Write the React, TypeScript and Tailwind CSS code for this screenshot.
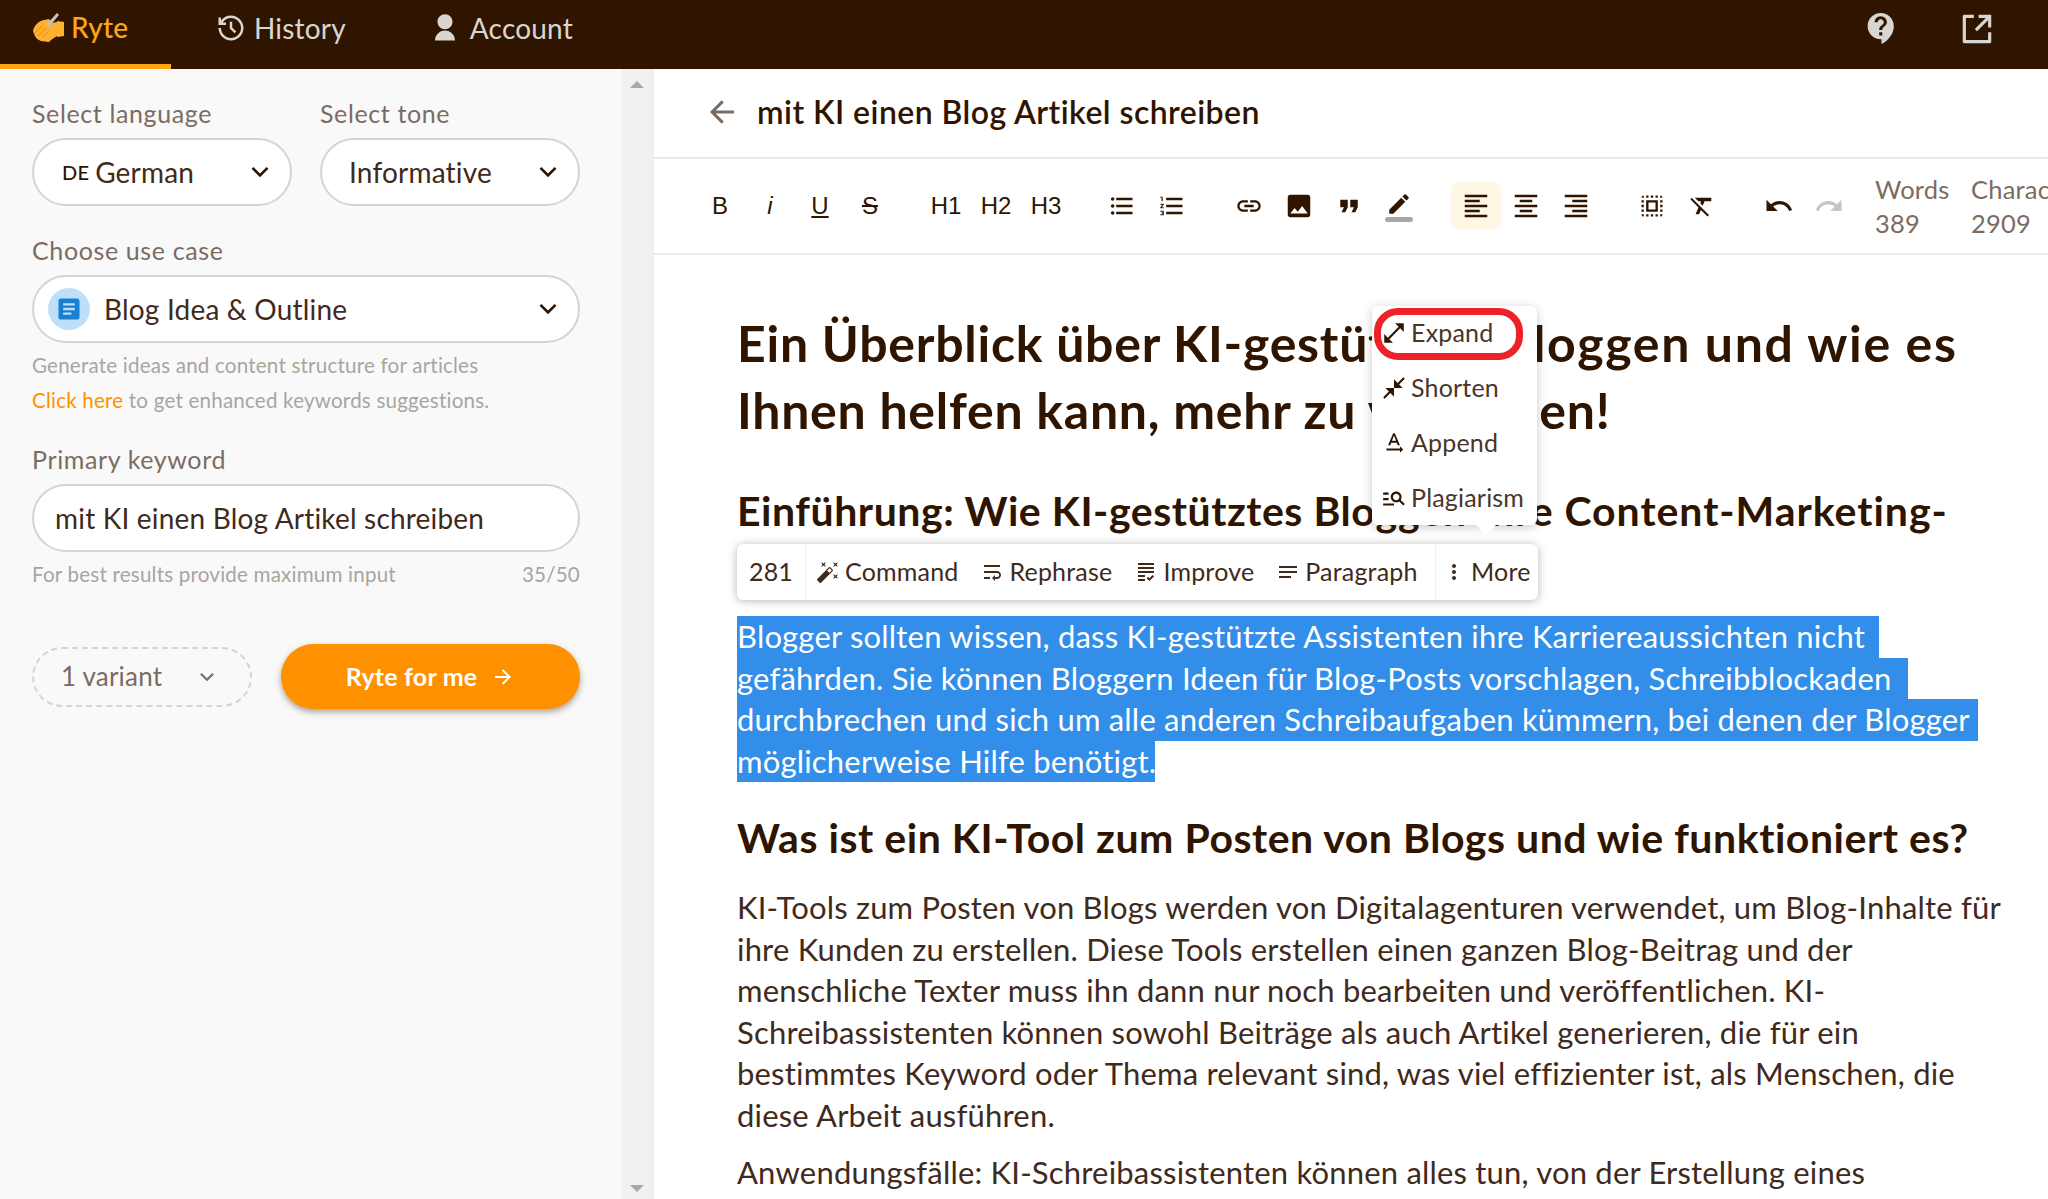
import type { ReactNode } from 'react';
import { RiArrowDownSLine, RiArrowLeftLine, RiArrowRightLine, RiHistoryLine, RiUserFill, RiShareBoxLine } from 'react-icons/ri';
import {
  MdArticle,
  MdAutoFixHigh,
  MdCloseFullscreen,
  MdContactSupport,
  MdEdit,
  MdFormatAlignCenter,
  MdFormatAlignLeft,
  MdFormatAlignRight,
  MdFormatClear,
  MdFormatListBulleted,
  MdFormatListNumbered,
  MdFormatQuote,
  MdImage,
  MdLink,
  MdMoreVert,
  MdNotes,
  MdOpenInFull,
  MdOutlineGrading,
  MdOutlineManageSearch,
  MdRedo,
  MdSelectAll,
  MdTextRotationNone,
  MdUndo,
  MdWrapText,
} from 'react-icons/md';

const selected = [
  { text: 'Blogger sollten wissen, dass KI-gestützte Assistenten ihre Karriereaussichten nicht', w: 'w-[1142px]' },
  { text: 'gefährden. Sie können Bloggern Ideen für Blog-Posts vorschlagen, Schreibblockaden', w: 'w-[1171px]' },
  { text: 'durchbrechen und sich um alle anderen Schreibaufgaben kümmern, bei denen der Blogger', w: 'w-[1241px]' },
  { text: 'möglicherweise Hilfe benötigt.', w: 'w-[418px]' },
];

const paragraph = [
  'KI-Tools zum Posten von Blogs werden von Digitalagenturen verwendet, um Blog-Inhalte für',
  'ihre Kunden zu erstellen. Diese Tools erstellen einen ganzen Blog-Beitrag und der',
  'menschliche Texter muss ihn dann nur noch bearbeiten und veröffentlichen. KI-',
  'Schreibassistenten können sowohl Beiträge als auch Artikel generieren, die für ein',
  'bestimmtes Keyword oder Thema relevant sind, was viel effizienter ist, als Menschen, die',
  'diese Arbeit ausführen.',
];

function Label({ children }: { children: ReactNode }) {
  return <div className="h-[34px] text-[25px] leading-[34px] tracking-[0.025em] text-[#7b6c62]">{children}</div>;
}

function Select({ children, className }: { children: ReactNode; className: string }) {
  return (
    <div className={`flex h-[68px] items-center justify-between rounded-full border-2 border-[#d8d3cf] bg-white pr-[14px] text-[28px] text-[#3f2a1c] ${className}`}>
      {children}
      <RiArrowDownSLine className="size-[32px] text-[#2f1500]" />
    </div>
  );
}

function Tool({ children, className = '' }: { children: ReactNode; className?: string }) {
  return (
    <div className={`flex h-[48px] w-[50px] shrink-0 items-center justify-center text-[#2f1500] ${className}`}>
      {children}
    </div>
  );
}

function TextTool({ children, className = '' }: { children: ReactNode; className?: string }) {
  return <Tool className={`[font-family:'Liberation_Sans',sans-serif] text-[24px] tracking-normal ${className}`}>{children}</Tool>;
}

function MenuItem({ icon, label }: { icon: ReactNode; label: string }) {
  return (
    <div className="flex h-[55px] items-center gap-[5px] pb-[2px] pl-[10px] text-[25px] text-[#4a3527]">
      <span className="flex w-[24px] justify-center text-[#2f1500]">{icon}</span>
      {label}
    </div>
  );
}

function BarItem({ icon, label }: { icon: ReactNode; label: string }) {
  return (
    <div className="flex items-center gap-[5px] text-[25px] text-[#3f2a1c]">
      {icon}
      {label}
    </div>
  );
}

export default function App() {
  return (
    <div className="flex h-[1199px] flex-col overflow-hidden bg-white [font-family:'Lato',sans-serif] tracking-[0.012em]">
      {/* Navigation */}
      <header className="flex h-[69px] shrink-0 items-stretch bg-[#2f1500]">
        <div className="flex w-[171px] items-center gap-[4px] border-b-[5px] border-[#ffa516] pb-[10px] pl-[31px] text-[28px] font-medium text-[#ffa516]">
          <svg viewBox="0 0 34 30" className="h-[30px] w-[36px]">
            <path d="M1 19c1-6 6-10 11-11l5-1 3 4 5-1v-1l7 1v14l-7 1v-1l-6 4-2 2-8-1-4-2-2-3z" fill="#ffb02e" />
            <path d="M3 21l8-8M6 24l8-8M10 26l7-7" stroke="#e0901a" strokeWidth="1" />
            <path d="M14 13 25 1l2 2-10 12z" fill="#c9c2b8" />
          </svg>
          Ryte
        </div>
        <div className="ml-[45px] flex items-center gap-[8px] pb-[14px] text-[28px] text-[#d9d5d1]">
          <RiHistoryLine className="size-[30px]" />
          History
        </div>
        <div className="ml-[84px] flex items-center gap-[10px] pb-[14px] text-[28px] text-[#d9d5d1]">
          <RiUserFill className="size-[30px]" />
          Account
        </div>
        <div className="ml-auto mr-[52px] flex items-center gap-[58px] pb-[12px] text-[#d9d5d1]">
          <MdContactSupport className="size-[37px]" />
          <RiShareBoxLine className="size-[38px]" />
        </div>
      </header>

      <div className="flex min-h-0 flex-1">
        {/* Form sidebar */}
        <aside className="flex w-[654px] shrink-0 border-r-2 border-[#eeeeee] bg-[#f9f9f9]">
          <div className="w-[622px] px-[32px] pt-[27px]">
            <div className="flex w-[548px] gap-[28px]">
              <div className="flex-1">
                <Label>Select language</Label>
                <Select className="mt-[8px] pl-[28px]">
                  <span className="flex items-center gap-[6px]">
                    <span className="text-[20px] font-medium text-[#2f1500]">DE</span>
                    German
                  </span>
                </Select>
              </div>
              <div className="flex-1">
                <Label>Select tone</Label>
                <Select className="mt-[8px] pl-[27px]">Informative</Select>
              </div>
            </div>
            <div className="mt-[27px] w-[548px]">
              <Label>Choose use case</Label>
              <Select className="mt-[8px] pl-[14px]">
                <span className="flex items-center gap-[14px]">
                  <span className="flex size-[42px] items-center justify-center rounded-full bg-[#bcdffb]">
                    <MdArticle className="size-[28px] text-[#1a7fce]" />
                  </span>
                  Blog Idea &amp; Outline
                </span>
              </Select>
            </div>
            <p className="mt-[5px] whitespace-nowrap text-[20.6px] leading-[35px] text-[#aaa49f]">
              Generate ideas and content structure for articles
              <br />
              <span className="text-[#ff9000]">Click here</span> to get enhanced keywords suggestions.
            </p>
            <div className="mt-[24px] w-[548px]">
              <Label>Primary keyword</Label>
              <div className="mt-[8px] flex h-[68px] items-center rounded-full border-2 border-[#d8d3cf] bg-white pl-[21px] text-[28px] text-[#3f2a1c]">
                mit KI einen Blog Artikel schreiben
              </div>
              <div className="mt-[8px] flex justify-between text-[20.6px] leading-[28px] text-[#aaa49f]">
                <span>For best results provide maximum input</span>
                <span>35/50</span>
              </div>
            </div>
            <div className="mt-[56px] flex w-[548px] items-center justify-between">
              <div className="flex h-[60px] w-[220px] items-center justify-between rounded-full border-2 border-dashed border-[#d8d3cf] pl-[27px] pr-[30px] text-[26px] text-[#7b6c62]">
                1 variant
                <RiArrowDownSLine className="size-[26px]" />
              </div>
              <div className="flex h-[65px] w-[299px] items-center justify-center gap-[14px] rounded-full bg-[#ff9000] text-[25px] font-bold text-white shadow-[0_3px_6px_rgba(80,50,20,0.45)]">
                Ryte for me
                <RiArrowRightLine className="size-[24px]" />
              </div>
            </div>
          </div>
          <div className="flex w-[30px] flex-col items-center justify-between bg-[#f1f1f1] pb-[7px] pt-[12px]">
            <div className="h-0 w-0 border-x-[7px] border-b-[7px] border-x-transparent border-b-[#a8a8a8]" />
            <div className="h-0 w-0 border-x-[7px] border-t-[7px] border-x-transparent border-t-[#a8a8a8]" />
          </div>
        </aside>

        {/* Editor */}
        <main className="relative min-w-0 flex-1 overflow-hidden">
          <div className="flex h-[90px] items-center gap-[17px] border-b-2 border-[#e8e8e8] pb-[2px] pl-[50px]">
            <RiArrowLeftLine className="size-[36px] text-[#7b6c62]" />
            <h2 className="text-[32px] font-semibold tracking-[0.014em] text-[#2f1500]">mit KI einen Blog Artikel schreiben</h2>
          </div>
          <div className="flex h-[96px] items-center border-b-2 border-[#eeebe8] pl-[41px]">
            <TextTool>B</TextTool>
            <TextTool className="italic">i</TextTool>
            <TextTool className="underline">U</TextTool>
            <TextTool className="line-through">S</TextTool>
            <div className="w-[26px] shrink-0" />
            <TextTool>H1</TextTool>
            <TextTool>H2</TextTool>
            <TextTool>H3</TextTool>
            <div className="w-[26px] shrink-0" />
            <Tool><MdFormatListBulleted className="size-[28px]" /></Tool>
            <Tool><MdFormatListNumbered className="size-[28px]" /></Tool>
            <div className="w-[27px] shrink-0" />
            <Tool><MdLink className="size-[28px]" /></Tool>
            <Tool><MdImage className="size-[30px]" /></Tool>
            <Tool><MdFormatQuote className="size-[30px]" /></Tool>
            <Tool className="flex-col">
              <MdEdit className="size-[26px]" />
              <span className="h-[5px] w-[28px] rounded-full bg-[#a9a5a1]" />
            </Tool>
            <div className="w-[27px] shrink-0" />
            <Tool className="rounded-[8px] bg-[#fef7e6]"><MdFormatAlignLeft className="size-[30px]" /></Tool>
            <Tool><MdFormatAlignCenter className="size-[30px]" /></Tool>
            <Tool><MdFormatAlignRight className="size-[30px]" /></Tool>
            <div className="w-[26px] shrink-0" />
            <Tool><MdSelectAll className="size-[28px]" /></Tool>
            <Tool><MdFormatClear className="size-[28px]" /></Tool>
            <div className="w-[27px] shrink-0" />
            <Tool><MdUndo className="size-[30px]" /></Tool>
            <Tool className="text-[#c9c4c0]"><MdRedo className="size-[30px]" /></Tool>
            <div className="ml-[21px] w-[96px] shrink-0 text-[25.5px] leading-[34px] text-[#7b6c62]">
              Words
              <br />
              389
            </div>
            <div className="shrink-0 text-[25.5px] leading-[34px] text-[#7b6c62]">
              Characters
              <br />
              2909
            </div>
          </div>

          <article className="w-[1394px] pl-[83px] pt-[55px] text-[#2f1500]">
            <h1 className="whitespace-nowrap text-[50px] font-bold leading-[67px] tracking-[0.015em]">
              Ein Überblick über KI-gestü<span className="tracking-[0.033em]">tztes Bloggen und wie es</span>
              <br />
              Ihnen helfen kann, mehr zu verdienen!
            </h1>
            <h2 className="mt-[40px] whitespace-nowrap text-[41px] font-bold leading-[54px] tracking-[0.013em]">
              Einführung: Wie KI-gestütztes Blo<span className="tracking-[0.0235em]">ggen Ihre Content-Marketing-</span>
            </h2>
            <div className="mt-[78px] text-[31px] leading-[41.5px]">
              {selected.map((line) => (
                <div key={line.text} className={`${line.w} whitespace-nowrap bg-[#338eea] text-white`}>
                  {line.text}
                </div>
              ))}
            </div>
            <h2 className="mt-[29px] whitespace-nowrap text-[41px] font-bold leading-[54px] tracking-[0.013em]">
              Was ist ein KI-Tool zum Posten von Blogs und wie funktioniert es?
            </h2>
            <div className="mt-[22px] text-[31px] leading-[41.5px] text-[#3f2a1c]">
              {paragraph.map((line) => (
                <div key={line} className="whitespace-nowrap">{line}</div>
              ))}
            </div>
            <div className="mt-[16px] whitespace-nowrap text-[31px] leading-[41.5px] text-[#3f2a1c]">
              Anwendungsfälle: KI-Schreibassistenten können alles tun, von der Erstellung eines
            </div>
          </article>

          {/* Selection toolbar */}
          <div className="absolute left-[83px] top-[475px] flex h-[56px] w-[801px] items-stretch rounded-[6px] bg-white shadow-[0_1px_8px_rgba(60,40,20,0.35)]">
            <div className="flex w-[69px] items-center justify-center border-r border-[#eeeeee] text-[25px] text-[#3f2a1c]">281</div>
            <div className="flex flex-1 items-center gap-[22px] border-r border-[#eeeeee] pl-[10px]">
              <BarItem icon={<MdAutoFixHigh className="size-[24px]" />} label="Command" />
              <BarItem icon={<MdWrapText className="size-[24px]" />} label="Rephrase" />
              <BarItem icon={<MdOutlineGrading className="size-[24px]" />} label="Improve" />
              <BarItem icon={<MdNotes className="size-[24px]" />} label="Paragraph" />
            </div>
            <div className="flex w-[102px] items-center pl-[6px]">
              <BarItem icon={<MdMoreVert className="size-[24px]" />} label="More" />
            </div>
          </div>

          {/* More menu */}
          <div className="absolute left-[718px] top-[237px] h-[219px] w-[165px] rounded-[6px] bg-white shadow-[0_2px_10px_rgba(60,40,20,0.25)]">
            <div className="absolute left-[2px] top-[2px] h-[52px] w-[149px] rounded-[24px] border-[7px] border-[#ee2028]" />
            <MenuItem icon={<MdOpenInFull className="size-[26px] shrink-0" />} label="Expand" />
            <MenuItem icon={<MdCloseFullscreen className="size-[26px] shrink-0" />} label="Shorten" />
            <MenuItem icon={<MdTextRotationNone className="size-[26px] shrink-0" />} label="Append" />
            <MenuItem icon={<MdOutlineManageSearch className="size-[26px] shrink-0" />} label="Plagiarism" />
            <div className="absolute left-[104px] top-[219px] h-0 w-0 border-x-[10px] border-t-[10px] border-x-transparent border-t-white" />
          </div>
        </main>
      </div>
    </div>
  );
}
